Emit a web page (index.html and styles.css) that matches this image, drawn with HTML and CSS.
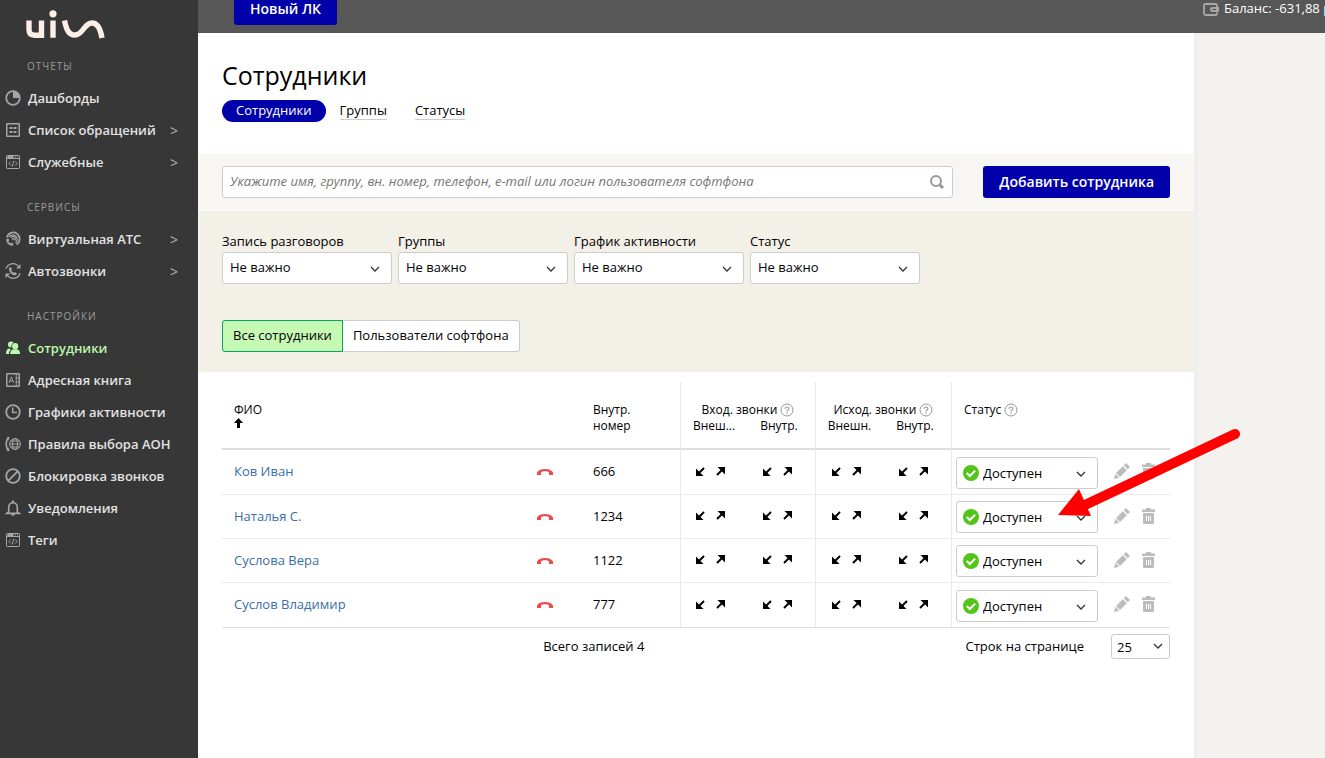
FILE: index.html
```
<!DOCTYPE html>
<html lang="ru">
<head>
<meta charset="utf-8">
<meta name="viewport" content="width=device-width, initial-scale=1">
<title>Сотрудники</title>
<link rel="stylesheet" href="styles.css">
</head>
<body>
<svg class="sprite" aria-hidden="true">
  <symbol id="pie" viewBox="0 0 16 16"><circle cx="8" cy="8" r="6.800" fill="none" stroke="currentColor" stroke-width="1.800"/><path d="M8 1.500A6.500 6.500 0 0 1 14.500 8H8z" fill="currentColor"/></symbol>
  <symbol id="list" viewBox="0 0 16 16"><rect x="1.750" y="1.750" width="12.500" height="12.500" rx=".6" fill="none" stroke="currentColor" stroke-width="1.500"/><path d="M4.500 5h3v2h-3zM8.500 5h3v2h-3zM4.500 9h3v2h-3zM8.500 9h3v2h-3z" fill="currentColor"/></symbol>
  <symbol id="code" viewBox="0 0 16 16"><rect x="1.500" y="1.500" width="13" height="13" rx=".8" fill="none" stroke="currentColor"/><path d="M2 4.500h12" stroke="currentColor"/><path d="M2.500 2h6v2h-6zM10 2.500h1v1h-1zM12 2.500h1v1h-1z" fill="currentColor"/><path d="M5.800 7.500l-2 2 2 2M10.200 7.500l2 2-2 2M8.800 7l-1.600 5.500" fill="none" stroke="currentColor"/></symbol>
  <symbol id="ats" viewBox="0 0 16 16"><g fill="none" stroke="currentColor"><path d="M2 6.500A6.400 6.400 0 1 1 11.500 13.400" stroke-width="1.700"/><path d="M4.200 6.200A4.300 4.300 0 1 1 10.500 11.800" stroke-width="1.300"/><path d="M6 6.800A2.300 2.300 0 1 1 9.600 9.500" stroke-width="1.300"/></g><path d="M1.300 8l2.200-.5.8 2-1 .8c.5 1 1.200 1.700 2.200 2.200l1.200-1.100 1.600 1-.4 2.300C4 15 .9 11.800 1.300 8z" fill="currentColor"/><circle cx="8" cy="8" r="1" fill="currentColor"/></symbol>
  <symbol id="auto" viewBox="0 0 16 16"><g fill="none" stroke="currentColor" stroke-width="1.300"><path d="M1 5.800A7.200 7.200 0 0 1 13.500 3.300M15 10.200A7.200 7.200 0 0 1 2.500 12.700"/></g><path d="M15.500 1v4.500H11zM.5 15v-4.500H5zM5.300 3.800l1.700 2.300-.8 1.300c.5 1 1.200 1.800 2.200 2.300l1.300-.8 2.300 1.700-1 1.500C7.300 13 3.400 8.800 4.100 4.900z" fill="currentColor"/></symbol>
  <symbol id="people" viewBox="0 0 16 16"><g fill="currentColor"><circle cx="6" cy="4.500" r="3"/><path d="M1 14c0-3.500 1-5 3-5.500l2 1C4.500 10.500 4 12 4 14z"/></g><circle cx="10.200" cy="6.300" r="3.800" fill="#373737"/><path d="M4.500 14.500c0-3.600 2-5 5.500-5z" fill="#373737"/><g fill="currentColor"><circle cx="10.200" cy="6.200" r="3.100"/><path d="M5.200 14c0-3 1-4.300 3.300-4.800h3.400c2.200.5 3.100 1.800 3.100 4.800z"/></g></symbol>
  <symbol id="book" viewBox="0 0 16 16"><rect x="1.750" y="1.750" width="12.500" height="12.500" rx=".6" fill="none" stroke="currentColor" stroke-width="1.500"/><path d="M11.200 2v12M11 6h3M11 10h3M4 10.800l2.400-6 2.400 6M5 9h3" fill="none" stroke="currentColor"/></symbol>
  <symbol id="clock" viewBox="0 0 16 16"><circle cx="8" cy="8" r="6.800" fill="none" stroke="currentColor" stroke-width="1.800"/><path d="M7.700 3.500v5H12" fill="none" stroke="currentColor" stroke-width="1.500"/></symbol>
  <symbol id="globe" viewBox="0 0 16 16"><path d="M3 .5C-.3 4-.5 12 3 15.500l1.500-1-1-3-1 .1C2 9.500 2 6.500 2.500 4.400l1 .1 1-3z" fill="currentColor"/><g fill="none" stroke="currentColor"><circle cx="10" cy="8" r="5.400"/><ellipse cx="10" cy="8" rx="2.500" ry="5.400"/><path d="M4.600 8h10.800M5.500 5h9M5.500 11h9"/></g></symbol>
  <symbol id="ban" viewBox="0 0 16 16"><circle cx="8" cy="8" r="6.800" fill="none" stroke="currentColor" stroke-width="1.800"/><path d="M3.600 12.400l8.800-8.800" stroke="currentColor" stroke-width="1.800"/></symbol>
  <symbol id="bell" viewBox="0 0 16 16"><path d="M3.700 12V7.500a4.300 4.800 0 0 1 8.600 0V12l1.700 1.300H2z" fill="none" stroke="currentColor" stroke-width="1.700"/><path d="M7 .5h2v2H7zM6 14h4l-1 1.800H7z" fill="currentColor"/></symbol>
  <symbol id="wallet" viewBox="0 0 16 14"><path d="M14 4V2.500A1.500 1.500 0 0 0 12.500 1h-10A1.500 1.500 0 0 0 1 2.500v8A1.500 1.500 0 0 0 2.500 12h10a1.500 1.500 0 0 0 1.500-1.500V9.500" fill="none" stroke="currentColor" stroke-width="1.800"/><path d="M9.500 4H16v5H9.500a2.500 2.500 0 0 1 0-5z" fill="currentColor"/><path d="M9.500 6.500h3.500" stroke="#575757" stroke-width="1.200"/></symbol>
  <symbol id="search" viewBox="0 0 16 16"><circle cx="7" cy="7" r="5" fill="none" stroke="currentColor" stroke-width="2"/><path d="M10.500 10.500l3.500 3.500" stroke="currentColor" stroke-width="3"/></symbol>
  <symbol id="chevron" viewBox="0 0 10 6"><path d="M1 1l4 4 4-4" fill="none" stroke="currentColor" stroke-width="1.300"/></symbol>
  <symbol id="sort" viewBox="0 0 9 10"><path d="M4.500 0L9 5H6v5H3V5H0z" fill="currentColor"/></symbol>
  <symbol id="help" viewBox="0 0 14 14"><circle cx="7" cy="7" r="6" fill="none" stroke="currentColor"/><path d="M5.200 5.800c0-2.500 3.700-2.300 3.700-.2C8.900 7 7 6.900 7 8.500M7 9.500v1.300" fill="none" stroke="currentColor" stroke-width="1.200"/></symbol>
  <symbol id="hangup" viewBox="0 0 16 6"><path d="M0 6V3.500C2.500-1.100 13.500-1.100 16 3.500V6h-4V3.300C10 2 6 2 4 3.300V6z" fill="currentColor"/></symbol>
  <symbol id="in" viewBox="0 0 9 9"><path d="M8 1L3.500 5.500" stroke="currentColor" stroke-width="2"/><path d="M0 1.500L7.500 9H0z" fill="currentColor"/></symbol>
  <symbol id="out" viewBox="0 0 9 9"><path d="M1 8l4.500-4.500" stroke="currentColor" stroke-width="2"/><path d="M1.500 0L9 7.500V0z" fill="currentColor"/></symbol>
  <symbol id="ok" viewBox="0 0 16 16"><circle cx="8" cy="8" r="8" fill="#52c41a"/><path d="M3.800 8l3 3 5.400-5.400" fill="none" stroke="#fff" stroke-width="2"/></symbol>
  <symbol id="pencil" viewBox="0 0 16 16"><path d="M0 16l1.300-5.200 3.900 3.900zM2 10l6.800-6.800L12.800 7.200 6 14zM9.700 2.300L12 0l4 4-2.300 2.300z" fill="currentColor"/></symbol>
  <symbol id="trash" viewBox="0 0 13 16"><path d="M4 0h5v1.500h4V4H0V1.500h4zM1 5h11v9.500a1.500 1.500 0 0 1-1.500 1.500h-8A1.500 1.500 0 0 1 1 14.500z" fill="currentColor"/><path d="M4.500 8v5M6.500 8v5M8.500 8v5" stroke="#fff"/></symbol>
</svg>

<div class="page">
  <nav class="sidebar" aria-label="Основное меню">
    <a class="logo" href="#" aria-label="UIS">
      <svg class="logo-mark" viewBox="0 0 80 30"><g fill="none" stroke="#fdeee6" stroke-width="5.400"><path d="M3 10.500v9Q3 25.200 8.500 25.200H15.500V10.500M27 10.500v17.300M38.500 10.500C40 18 42 25 49 25C57 25 58 13 66 13C72 13 74.500 19 76 28"/></g><circle cx="27" cy="3.800" r="3.600" fill="#fdeee6"/></svg>
    </a>
    <h2 class="nav-title">ОТЧЕТЫ</h2>
    <a class="nav-item" href="#"><svg class="nav-icon"><use href="#pie"/></svg>Дашборды</a>
    <a class="nav-item" href="#"><svg class="nav-icon"><use href="#list"/></svg>Список обращений<span class="nav-more">&gt;</span></a>
    <a class="nav-item" href="#"><svg class="nav-icon"><use href="#code"/></svg>Служебные<span class="nav-more">&gt;</span></a>
    <h2 class="nav-title">СЕРВИСЫ</h2>
    <a class="nav-item" href="#"><svg class="nav-icon"><use href="#ats"/></svg>Виртуальная АТС<span class="nav-more">&gt;</span></a>
    <a class="nav-item" href="#"><svg class="nav-icon"><use href="#auto"/></svg>Автозвонки<span class="nav-more">&gt;</span></a>
    <h2 class="nav-title">НАСТРОЙКИ</h2>
    <a class="nav-item active" href="#" aria-current="page"><svg class="nav-icon"><use href="#people"/></svg>Сотрудники</a>
    <a class="nav-item" href="#"><svg class="nav-icon"><use href="#book"/></svg>Адресная книга</a>
    <a class="nav-item" href="#"><svg class="nav-icon"><use href="#clock"/></svg>Графики активности</a>
    <a class="nav-item" href="#"><svg class="nav-icon"><use href="#globe"/></svg>Правила выбора АОН</a>
    <a class="nav-item" href="#"><svg class="nav-icon"><use href="#ban"/></svg>Блокировка звонков</a>
    <a class="nav-item" href="#"><svg class="nav-icon"><use href="#bell"/></svg>Уведомления</a>
    <a class="nav-item" href="#"><svg class="nav-icon"><use href="#code"/></svg>Теги</a>
  </nav>

  <div class="body">
    <header class="topbar">
      <button class="topbar-button" type="button">Новый ЛК</button>
      <div class="balance"><svg class="balance-icon"><use href="#wallet"/></svg><span>Баланс: -631,88 р.</span></div>
    </header>

    <main class="content">
      <section class="heading">
        <h1 class="title">Сотрудники</h1>
        <div class="tabs">
          <a class="tab current" href="#"><span>Сотрудники</span></a>
          <a class="tab" href="#"><span>Группы</span></a>
          <a class="tab" href="#"><span>Статусы</span></a>
        </div>
      </section>

      <section class="search-bar">
        <div class="search">
          <input class="search-input" type="text" aria-label="Поиск" placeholder="Укажите имя, группу, вн. номер, телефон, e-mail или логин пользователя софтфона">
          <svg class="search-icon"><use href="#search"/></svg>
        </div>
        <button class="primary" type="button">Добавить сотрудника</button>
      </section>

      <section class="filters">
        <div class="filter-row">
          <div class="filter"><label for="f1">Запись разговоров</label><div class="select-box"><select id="f1"><option>Не важно</option></select><svg class="arrow"><use href="#chevron"/></svg></div></div>
          <div class="filter"><label for="f2">Группы</label><div class="select-box"><select id="f2"><option>Не важно</option></select><svg class="arrow"><use href="#chevron"/></svg></div></div>
          <div class="filter"><label for="f3">График активности</label><div class="select-box"><select id="f3"><option>Не важно</option></select><svg class="arrow"><use href="#chevron"/></svg></div></div>
          <div class="filter"><label for="f4">Статус</label><div class="select-box"><select id="f4"><option>Не важно</option></select><svg class="arrow"><use href="#chevron"/></svg></div></div>
        </div>
        <div class="toggle">
          <button class="toggle-button on" type="button" aria-pressed="true">Все сотрудники</button>
          <button class="toggle-button" type="button" aria-pressed="false">Пользователи софтфона</button>
        </div>
      </section>

      <section class="list">
        <table class="staff">
          <colgroup><col><col class="col-phone"><col class="col-number"><col class="col-in-outer"><col class="col-call"><col class="col-call"><col class="col-call"><col class="col-status"><col class="col-actions"></colgroup>
          <thead>
            <tr>
              <th class="top last" rowspan="2">ФИО<svg class="sort"><use href="#sort"/></svg></th>
              <th class="top last" rowspan="2"></th>
              <th class="top last" rowspan="2">Внутр.<br>номер</th>
              <th class="top group line" colspan="2">Вход. звонки <svg class="help"><use href="#help"/></svg></th>
              <th class="top group line" colspan="2">Исход. звонки <svg class="help"><use href="#help"/></svg></th>
              <th class="top last line" rowspan="2">Статус <svg class="help"><use href="#help"/></svg></th>
              <th class="top last" rowspan="2"></th>
            </tr>
            <tr>
              <th class="sub last line">Внеш...</th><th class="sub inner last">Внутр.</th>
              <th class="sub last line">Внешн.</th><th class="sub inner last">Внутр.</th>
            </tr>
          </thead>
          <tbody>
            <tr>
              <td><a class="name" href="#">Ков Иван</a></td><td class="phone"><svg class="hangup"><use href="#hangup"/></svg></td><td>666</td>
              <td class="line"><div class="calls"><svg><use href="#in"/></svg><svg><use href="#out"/></svg></div></td><td><div class="calls"><svg><use href="#in"/></svg><svg><use href="#out"/></svg></div></td>
              <td class="line"><div class="calls"><svg><use href="#in"/></svg><svg><use href="#out"/></svg></div></td><td><div class="calls"><svg><use href="#in"/></svg><svg><use href="#out"/></svg></div></td>
              <td class="line status"><div class="select-box state"><svg class="ok"><use href="#ok"/></svg><select aria-label="Статус: Ков Иван"><option>Доступен</option></select><svg class="arrow"><use href="#chevron"/></svg></div></td>
              <td class="actions"><div class="buttons"><button type="button" aria-label="Изменить"><svg class="pencil"><use href="#pencil"/></svg></button><button type="button" aria-label="Удалить"><svg class="trash"><use href="#trash"/></svg></button></div></td>
            </tr>
            <tr>
              <td><a class="name" href="#">Наталья С.</a></td><td class="phone"><svg class="hangup"><use href="#hangup"/></svg></td><td>1234</td>
              <td class="line"><div class="calls"><svg><use href="#in"/></svg><svg><use href="#out"/></svg></div></td><td><div class="calls"><svg><use href="#in"/></svg><svg><use href="#out"/></svg></div></td>
              <td class="line"><div class="calls"><svg><use href="#in"/></svg><svg><use href="#out"/></svg></div></td><td><div class="calls"><svg><use href="#in"/></svg><svg><use href="#out"/></svg></div></td>
              <td class="line status"><div class="select-box state"><svg class="ok"><use href="#ok"/></svg><select aria-label="Статус: Наталья С."><option>Доступен</option></select><svg class="arrow"><use href="#chevron"/></svg>
                <svg class="pointer" viewBox="0 0 184 90" aria-hidden="true"><path d="M27 77L177 6" stroke="#f00" stroke-width="10" stroke-linecap="round"/><path d="M0 87L21 61 33 88z" fill="#f00"/></svg></div></td>
              <td class="actions"><div class="buttons"><button type="button" aria-label="Изменить"><svg class="pencil"><use href="#pencil"/></svg></button><button type="button" aria-label="Удалить"><svg class="trash"><use href="#trash"/></svg></button></div></td>
            </tr>
            <tr>
              <td><a class="name" href="#">Суслова Вера</a></td><td class="phone"><svg class="hangup"><use href="#hangup"/></svg></td><td>1122</td>
              <td class="line"><div class="calls"><svg><use href="#in"/></svg><svg><use href="#out"/></svg></div></td><td><div class="calls"><svg><use href="#in"/></svg><svg><use href="#out"/></svg></div></td>
              <td class="line"><div class="calls"><svg><use href="#in"/></svg><svg><use href="#out"/></svg></div></td><td><div class="calls"><svg><use href="#in"/></svg><svg><use href="#out"/></svg></div></td>
              <td class="line status"><div class="select-box state"><svg class="ok"><use href="#ok"/></svg><select aria-label="Статус: Суслова Вера"><option>Доступен</option></select><svg class="arrow"><use href="#chevron"/></svg></div></td>
              <td class="actions"><div class="buttons"><button type="button" aria-label="Изменить"><svg class="pencil"><use href="#pencil"/></svg></button><button type="button" aria-label="Удалить"><svg class="trash"><use href="#trash"/></svg></button></div></td>
            </tr>
            <tr>
              <td><a class="name" href="#">Суслов Владимир</a></td><td class="phone"><svg class="hangup"><use href="#hangup"/></svg></td><td>777</td>
              <td class="line"><div class="calls"><svg><use href="#in"/></svg><svg><use href="#out"/></svg></div></td><td><div class="calls"><svg><use href="#in"/></svg><svg><use href="#out"/></svg></div></td>
              <td class="line"><div class="calls"><svg><use href="#in"/></svg><svg><use href="#out"/></svg></div></td><td><div class="calls"><svg><use href="#in"/></svg><svg><use href="#out"/></svg></div></td>
              <td class="line status"><div class="select-box state"><svg class="ok"><use href="#ok"/></svg><select aria-label="Статус: Суслов Владимир"><option>Доступен</option></select><svg class="arrow"><use href="#chevron"/></svg></div></td>
              <td class="actions"><div class="buttons"><button type="button" aria-label="Изменить"><svg class="pencil"><use href="#pencil"/></svg></button><button type="button" aria-label="Удалить"><svg class="trash"><use href="#trash"/></svg></button></div></td>
            </tr>
          </tbody>
        </table>
        <div class="list-footer">
          <span class="total">Всего записей 4</span>
          <label for="rows">Строк на странице</label>
          <div class="select-box rows"><select id="rows"><option>25</option></select><svg class="arrow"><use href="#chevron"/></svg></div>
        </div>
      </section>
    </main>
  </div>
</div>
</body>
</html>
```

FILE: styles.css
```
* { box-sizing: border-box; }

body {
  margin: 0;
  font: 13px/20px "Open Sans", "Noto Sans", sans-serif;
  color: #000;
  background: #f3f2ee;
}

button, input, select { font: inherit; color: inherit; }
a { color: inherit; text-decoration: none; }
.sprite { display: none; }

.page { display: flex; min-height: 100vh; }

/* Sidebar */
.sidebar { flex: none; width: 198px; background: #373737; color: #e2e2e2; }
.logo { display: block; height: 37px; padding: 10px 0 0 26px; }
.logo-mark { display: block; width: 80px; height: 30px; }
.nav-title {
  margin: 0;
  padding: 19px 0 6px 27px;
  font-size: 10px;
  font-weight: 400;
  line-height: 20px;
  letter-spacing: 1px;
  color: #9b9b9b;
}
.nav-item {
  display: flex;
  align-items: center;
  gap: 7px;
  height: 32px;
  padding: 0 20px 0 5px;
  font-weight: 600;
  white-space: nowrap;
}
.nav-icon { flex: none; width: 16px; height: 16px; color: #a5a5a5; }
.nav-more { margin-left: auto; padding-top: 2px; font-size: 14px; font-weight: 400; color: #b5b5b5; }
.nav-item.active, .active .nav-icon { color: #bdf9ae; }

/* Top bar */
.body { flex: 1; min-width: 0; display: flex; flex-direction: column; }
.topbar {
  display: flex;
  align-items: flex-start;
  justify-content: space-between;
  height: 33px;
  padding-left: 36px;
  overflow: hidden;
  background: #575757;
  color: #fff;
}
.topbar-button {
  height: 25px;
  padding: 0 16px 8px;
  border: 0;
  border-radius: 0 0 3px 3px;
  background: #0000ab;
  font-size: 14px;
  font-weight: 600;
  line-height: 17px;
}
.balance { display: flex; gap: 5px; width: 122px; overflow: hidden; white-space: nowrap; line-height: 16px; }
.balance-icon { flex: none; width: 16px; height: 14px; margin-top: 3px; color: #a8a8a8; }

/* Content column */
.content { flex: 1; margin-right: 127px; border-right: 4px solid #eee; background: #fff; }
.heading { padding: 26px 24px 32px; }
.title { margin: 0; font-size: 25px; font-weight: 500; line-height: 32px; }
.tabs { display: flex; margin-top: 9px; }
.tab { height: 22px; padding: 0 14px; line-height: 20px; }
.tab span { display: inline-block; line-height: 18px; border-bottom: 1px solid #ccc; }
.tab.current { border-radius: 11px; background: #0000ab; color: #fff; }
.tab.current span { border-color: transparent; }

.search-bar {
  display: flex;
  gap: 30px;
  padding: 12px 24px;
  border-bottom: 1px solid #fff;
  background: #f7f6f2;
}
.search { position: relative; flex: 1; }
.search-input {
  display: block;
  width: 100%;
  height: 32px;
  padding: 0 40px 2px 7px;
  border: 1px solid #ccc;
  border-radius: 3px;
  background: #fff;
}
.search-input::placeholder { font-style: italic; color: #757575; opacity: 1; }
.search-icon { position: absolute; right: 8px; top: 8px; width: 16px; height: 16px; color: #999; }
.primary {
  height: 32px;
  padding: 0 16px;
  border: 0;
  border-radius: 3px;
  background: #0000ab;
  color: #fff;
  font-size: 14px;
  font-weight: 600;
}

/* Filters */
.filters { padding: 20px 24px; background: #f3f0e8; }
.filter-row { display: flex; gap: 6px; }
.filter { width: 170px; }
.filter label { display: block; padding-bottom: 1px; }
.select-box { position: relative; }
.select-box select {
  display: block;
  width: 100%;
  height: 32px;
  padding: 0 24px 0 7px;
  appearance: none;
  border: 1px solid #ccc;
  border-radius: 3px;
  background: #fff;
}
.filter select { padding-bottom: 2px; }
.arrow { position: absolute; right: 12px; top: 14px; width: 10px; height: 6px; color: #333; pointer-events: none; }

.toggle { display: flex; margin-top: 36px; }
.toggle-button {
  height: 32px;
  padding: 0 10px 2px;
  border: 1px solid #ccc;
  border-left: 0;
  border-radius: 0 3px 3px 0;
  background: #fff;
}
.toggle-button.on { border: 1px solid #00a862; border-radius: 3px 0 0 3px; background: #c6f9b4; }

/* Table */
.list { padding: 10px 24px 24px; }
.staff { width: 100%; table-layout: fixed; border-spacing: 0; border-bottom: 1px solid #ddd; }
.col-phone { width: 60px; }
.col-number { width: 99px; }
.col-in-outer { width: 67px; }
.col-call { width: 68px; }
.col-status { width: 153px; }
.col-actions { width: 66px; }
.staff th {
  padding: 0 12px;
  font-size: 12px;
  font-weight: 500;
  line-height: 16px;
  text-align: left;
  vertical-align: top;
  white-space: nowrap;
}
.staff th.top { padding-top: 20px; }
.staff th.last { border-bottom: 2px solid #ddd; }
.staff th.group { padding-left: 0; padding-right: 0; text-align: center; }
.staff th.sub { padding: 0 0 14px; text-align: center; }
.staff th.inner { padding-right: 4px; }
.line { border-left: 1px solid #eaeaea; }
.sort { display: block; width: 9px; height: 10px; }
.help { width: 14px; height: 14px; margin: -3px 0 -1px; vertical-align: middle; color: #999; }
.staff td { height: 44px; padding: 0 12px 2px; border-bottom: 1px solid #eaeaea; }
.staff tbody tr:first-child td { height: 45px; }
.staff tbody tr:last-child td { border-bottom: 0; }
.name { color: #3a6ea5; }
.staff td.phone { padding: 0 0 0 16px; }
.hangup { display: block; width: 16px; height: 6px; color: #e84c4c; }
.calls { display: flex; justify-content: center; gap: 11px; margin: 0 -6px 0 -12px; }
.calls svg { flex: none; width: 9px; height: 9px; }
.staff td.status { padding: 1px 5px 0 4px; }
.state { width: 142px; }
.state select { padding-left: 26px; }
.ok { position: absolute; left: 7px; top: 8px; width: 16px; height: 16px; pointer-events: none; }
.pointer { position: absolute; left: 102px; top: -73px; z-index: 2; width: 184px; height: 90px; fill: none; pointer-events: none; }
.staff td.actions { padding: 0 0 2px 10px; }
.buttons { display: flex; align-items: center; gap: 12px; }
.buttons button { padding: 0; border: 0; background: none; color: #bcbcbc; }
.buttons svg { display: block; height: 16px; }
.pencil { width: 16px; }
.trash { width: 13px; }

.list-footer { display: flex; align-items: center; padding-top: 6px; }
.total { flex: 1; text-align: center; }
.total, .list-footer label { padding-bottom: 2px; }
.rows { width: 59px; margin-left: 27px; }
.rows select { height: 25px; padding: 0 20px 0 5px; }
.rows .arrow { right: 7px; top: 9px; }
```
